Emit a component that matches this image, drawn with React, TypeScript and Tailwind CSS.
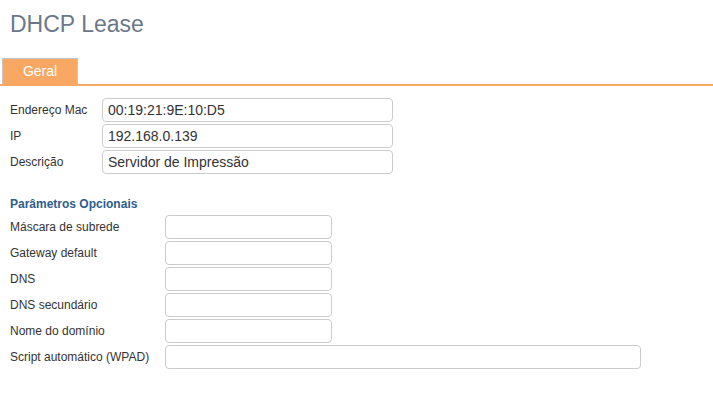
export default function App() {
  const main = [
    { label: 'Endereço Mac', value: '00:19:21:9E:10:D5' },
    { label: 'IP', value: '192.168.0.139' },
    { label: 'Descrição', value: 'Servidor de Impressão' },
  ];
  const optional = [
    { label: 'Máscara de subrede', wide: false },
    { label: 'Gateway default', wide: false },
    { label: 'DNS', wide: false },
    { label: 'DNS secundário', wide: false },
    { label: 'Nome do domínio', wide: false },
    { label: 'Script automático (WPAD)', wide: true },
  ];

  return (
    <div className="w-[713px] h-[411px] bg-white font-['Liberation_Sans',Arial,sans-serif] text-[#333]">
      {/* Title */}
      <h1 className="pl-[10px] pt-[10px] text-[23px] leading-[28px] text-[#6b7889]">DHCP Lease</h1>

      {/* Tabs */}
      <div className="mt-[20px] flex px-[2px] border-b-2 border-[#f8a862]">
        <div className="w-[76px] h-[26px] bg-[#f8a862] border border-b-0 border-[#c2c6ca] text-white text-[14px] flex items-center justify-center">
          Geral
        </div>
      </div>

      {/* Main fields */}
      <div className="pt-[12px] pl-[10px] flex flex-col gap-[2px]">
        {main.map((f) => (
          <div key={f.label} className="flex items-center h-[24px]">
            <span className="w-[92px] text-[12px]">{f.label}</span>
            <input
              readOnly
              value={f.value}
              className="w-[291px] h-[24px] border border-[#cccccc] rounded-[4px] px-[5px] text-[14px] text-[#333] outline-none"
            />
          </div>
        ))}
      </div>

      {/* Optional params */}
      <div className="pt-[23px] pl-[10px]">
        <div className="text-[12px] font-bold text-[#2d5d8c] leading-[14px]">Parâmetros Opcionais</div>
        <div className="mt-[4px] flex flex-col gap-[2px]">
          {optional.map((f) => (
            <div key={f.label} className="flex items-center h-[24px]">
              <span className="w-[155px] text-[12px]">{f.label}</span>
              <input
                readOnly
                className={`${f.wide ? 'w-[476px]' : 'w-[167px]'} h-[24px] border border-[#cccccc] rounded-[4px] px-[5px] text-[14px] outline-none`}
              />
            </div>
          ))}
        </div>
      </div>
    </div>
  );
}
